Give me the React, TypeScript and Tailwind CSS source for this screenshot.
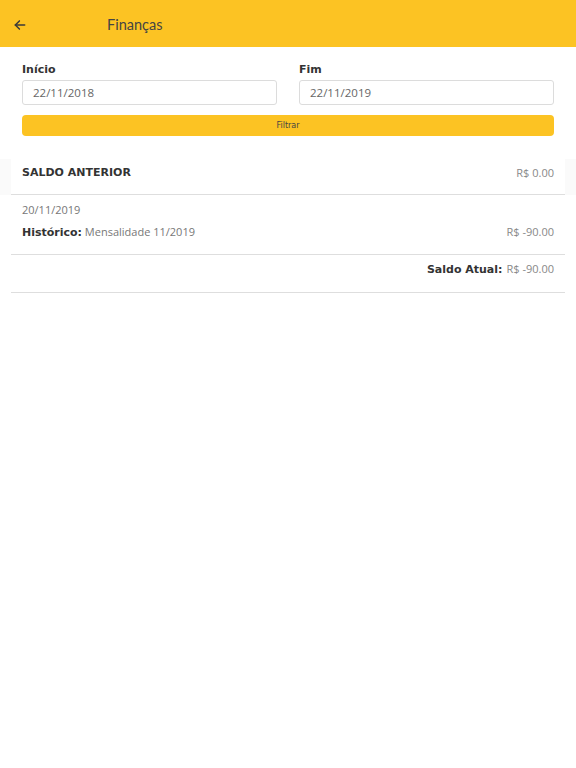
import React from "react";

const reg = { fontFamily: '"Open Sans", "Liberation Sans", sans-serif' };
const title = { fontFamily: 'Lato, "Open Sans", sans-serif' };

export default function App() {
  return (
    <div className="min-h-[768px] w-full bg-white" style={reg}>
      <header className="flex h-[47px] items-center bg-[#fcc323] pl-[13px] pt-[3px]">
        <svg width="14" height="14" viewBox="0 0 24 24" fill="none" stroke="#3a3a3a" strokeWidth="2.6" strokeLinecap="round" strokeLinejoin="round">
          <path d="M20 12H4" />
          <path d="M11 5l-7 7 7 7" />
        </svg>
        <span className="ml-[80px] text-[14.5px] text-[#444]" style={title}>Finanças</span>
      </header>

      <div className="px-[22px] pt-[15px]">
        <div className="grid grid-cols-2 gap-[22px]">
          <div>
            <div className="font-[family-name:DejaVu_Sans] text-[11px] font-bold leading-[16px] text-[#333]">Início</div>
            <div className="mt-[2px] flex h-[25px] items-center rounded-[3px] border border-[#dcdcdc] pl-[10px] text-[11.5px] text-[#666]">22/11/2018</div>
          </div>
          <div>
            <div className="font-[family-name:DejaVu_Sans] text-[11px] font-bold leading-[16px] text-[#333]">Fim</div>
            <div className="mt-[2px] flex h-[25px] items-center rounded-[3px] border border-[#dcdcdc] pl-[10px] text-[11.5px] text-[#666]">22/11/2019</div>
          </div>
        </div>
        <div className="mt-[10px] flex h-[21px] items-center justify-center rounded-[4px] bg-[#fcc323] font-[family-name:DejaVu_Sans] text-[8px] text-[#444]">Filtrar</div>
      </div>

      <div className="mt-[23px] bg-[#fafafa] px-[11px]">
        <div className="flex h-[36px] items-start justify-between border-b border-[#dedede] bg-white px-[11px] pt-[6px] leading-[16px]">
          <span className="font-[family-name:DejaVu_Sans] text-[11px] font-bold text-[#333]">SALDO ANTERIOR</span>
          <span className="text-[11px] text-[#888]">R$ 0.00</span>
        </div>
      </div>
      <div className="px-[11px]">
        <div className="border-b border-[#dedede] px-[11px] pb-[13px] pt-[7px]">
          <div className="text-[11px] leading-[16px] text-[#777]">20/11/2019</div>
          <div className="mt-[6px] flex items-baseline justify-between leading-[16px]">
            <span className="text-[11px] text-[#777]">
              <span className="font-[family-name:DejaVu_Sans] text-[11px] font-bold text-[#333]">Histórico:</span> Mensalidade 11/2019
            </span>
            <span className="text-[11px] text-[#888]">R$ -90.00</span>
          </div>
        </div>
        <div className="flex h-[38px] items-baseline justify-end border-b border-[#dedede] px-[11px] pt-[6px] leading-[16px]">
          <span className="font-[family-name:DejaVu_Sans] text-[11px] font-bold text-[#333]">Saldo Atual:</span>
          <span className="ml-[4px] text-[11px] text-[#888]">R$ -90.00</span>
        </div>
      </div>
    </div>
  );
}
